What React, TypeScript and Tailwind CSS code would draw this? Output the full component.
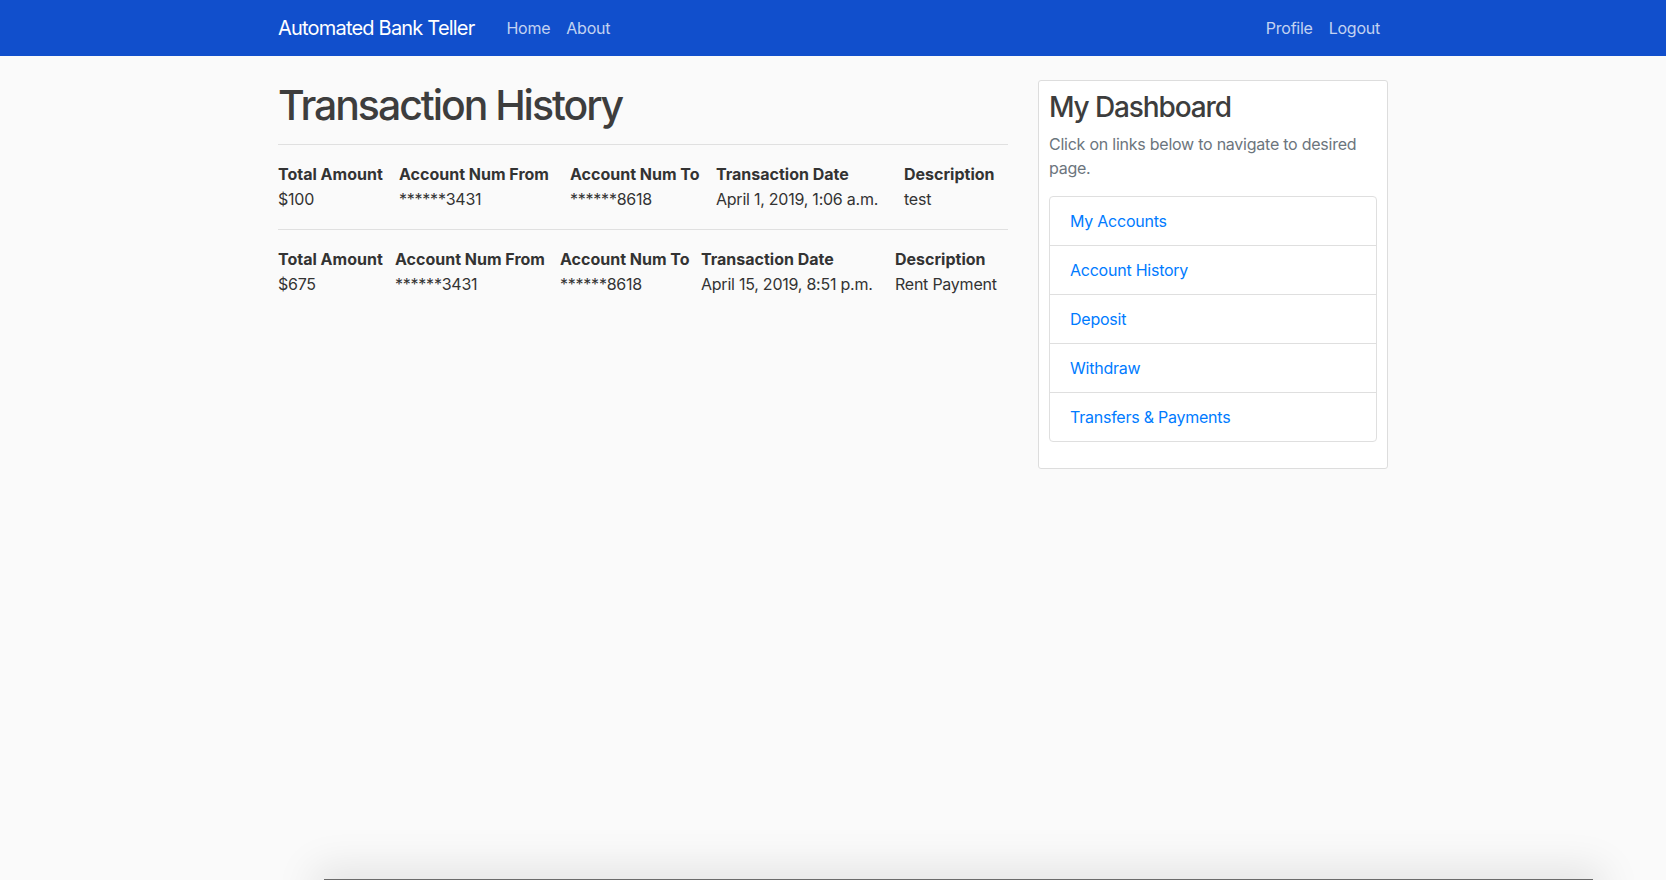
const transactions = [
  {
    amount: "$100",
    from: "******3431",
    to: "******8618",
    date: "April 1, 2019, 1:06 a.m.",
    description: "test",
    cols: "grid-cols-[121px_171px_146px_188px_1fr]",
  },
  {
    amount: "$675",
    from: "******3431",
    to: "******8618",
    date: "April 15, 2019, 8:51 p.m.",
    description: "Rent Payment",
    cols: "grid-cols-[117px_165px_141px_194px_1fr]",
  },
];

const dashboardLinks = [
  "My Accounts",
  "Account History",
  "Deposit",
  "Withdraw",
  "Transfers & Payments",
];

export default function App() {
  return (
    <div className="min-h-[880px] bg-[#fafafa] font-['Inter',sans-serif] text-base tracking-[-0.015em] text-[#333333]">
      <header className="bg-[#114fcc]">
        <nav className="mx-auto flex h-14 w-[1110px] items-center">
          <a className="mr-6 text-xl leading-[30px] tracking-[-0.04em] text-white">
            Automated Bank Teller
          </a>
          <div className="flex">
            <a className="px-2 leading-6 text-white/75">Home</a>
            <a className="px-2 leading-6 text-white/75">About</a>
          </div>
          <div className="ml-auto flex">
            <a className="px-2 leading-6 text-white/75">Profile</a>
            <a className="px-2 leading-6 text-white/75">Logout</a>
          </div>
        </nav>
      </header>

      <div className="mx-auto mt-6 flex w-[1110px] items-start gap-[30px]">
        <main className="w-[730px]">
          <h1 className="text-[41px] font-medium leading-[50px] tracking-[-0.05em] text-[#3d3d3d]">
            Transaction History
          </h1>

          <div className="mt-[14px]">
            {transactions.map((t) => (
              <div key={t.amount}>
                <hr className="border-t border-[#e0e0e0]" />
                <div className={`grid ${t.cols} py-[17px] leading-[25px]`}>
                  <div className="font-bold tracking-normal">Total Amount</div>
                  <div className="font-bold tracking-normal">Account Num From</div>
                  <div className="font-bold tracking-normal">Account Num To</div>
                  <div className="font-bold tracking-normal">Transaction Date</div>
                  <div className="font-bold tracking-normal">Description</div>
                  <div>{t.amount}</div>
                  <div>{t.from}</div>
                  <div>{t.to}</div>
                  <div>{t.date}</div>
                  <div>{t.description}</div>
                </div>
              </div>
            ))}
          </div>
        </main>

        <aside className="w-[350px] rounded-[3px] border border-[#dddddd] bg-white px-[10px] pt-[10px] pb-[10px]">
          <h3 className="mb-2 text-[28px] font-medium leading-[33px] tracking-[-0.04em] text-[#3d3d3d]">
            My Dashboard
          </h3>
          <p className="mb-4 leading-6 text-[#6c757d]">
            Click on links below to navigate to desired page.
          </p>
          <ul className="mb-4 rounded border border-[#dfdfdf]">
            {dashboardLinks.map((link, i) => (
              <li
                key={link}
                className={`px-5 py-3 leading-6 ${i > 0 ? "border-t border-[#dfdfdf]" : ""}`}
              >
                <a className="text-[#007bff]">{link}</a>
              </li>
            ))}
          </ul>
        </aside>
      </div>

      <div className="fixed top-[879px] left-[324px] h-5 w-[1269px] bg-[#6b6b6b] shadow-[0_0_40px_10px_rgba(0,0,0,0.1)]" />
    </div>
  );
}
